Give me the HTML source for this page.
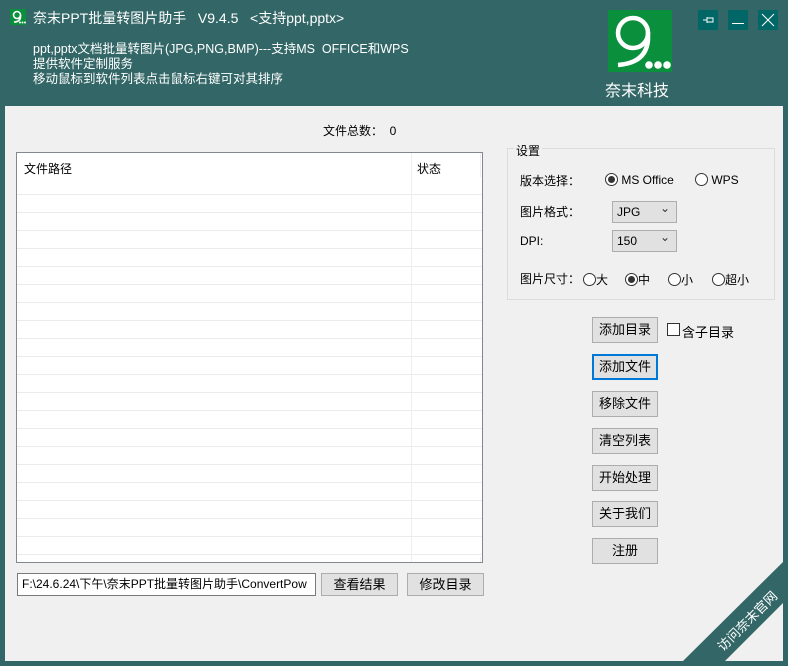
<!DOCTYPE html>
<html><head><meta charset="utf-8"><style>
*{margin:0;padding:0;box-sizing:border-box}
body{width:788px;height:666px;background:#336666;position:relative;overflow:hidden;font-family:"Liberation Sans","Noto Sans CJK SC",sans-serif;font-size:12px;color:#000}
.a{position:absolute}
.w{color:#fff}
.btn{position:absolute;background:#e1e1e1;border:1px solid #adadad;text-align:center;font-size:13px;line-height:24px}
.rad{display:inline-block;width:13px;height:13px;border:1px solid #333;border-radius:50%;vertical-align:-2px;background:#fff;position:relative}
.rad.on::after{content:"";position:absolute;left:2px;top:2px;width:7px;height:7px;border-radius:50%;background:#333}
.sel{position:absolute;background:#e1e1e1;border:1px solid #adadad;height:22px;width:65px;font-size:12px;line-height:20px;padding-left:4px}
.sel::after{content:"⌄";position:absolute;right:6px;top:-4px;font-size:12px;color:#333}
</style></head><body>
<svg class="a" style="left:10px;top:9px" width="16" height="16"><rect width="16" height="16" fill="#0a8f3c"/><circle cx="7" cy="6" r="3.5" stroke="#fff" stroke-width="1.6" fill="none"/><path d="M10.5 6V8Q10 13 4 13" stroke="#fff" stroke-width="1.6" fill="none"/><circle cx="10" cy="13.5" r="1" fill="#fff"/><circle cx="12.5" cy="13.5" r="1" fill="#fff"/><circle cx="15" cy="13.5" r="1" fill="#fff"/></svg>
<div class="a w" style="left:33px;top:8px;font-size:14px">奈末PPT批量转图片助手&nbsp;&nbsp;&nbsp;V9.4.5&nbsp;&nbsp;&nbsp;&lt;支持ppt,pptx&gt;</div>
<div class="a w" style="left:33px;top:42px;font-size:12.5px;line-height:15px">ppt,pptx文档批量转图片(JPG,PNG,BMP)---支持MS&nbsp;&nbsp;OFFICE和WPS<br>提供软件定制服务<br>移动鼠标到软件列表点击鼠标右键可对其排序</div>
<svg class="a" style="left:608px;top:10px" width="64" height="62"><rect width="64" height="62" fill="#0a8f3c"/>
<circle cx="25" cy="23" r="15" stroke="#fff" stroke-width="4.5" fill="none"/>
<path d="M40 22V30Q38 53 10 55" stroke="#fff" stroke-width="4.5" fill="none"/>
<circle cx="41" cy="55" r="3.8" fill="#fff"/><circle cx="50" cy="55" r="3.8" fill="#fff"/><circle cx="59" cy="55" r="3.8" fill="#fff"/></svg>
<div class="a w" style="left:605px;top:77px;font-size:16px">奈末科技</div>
<div class="a" style="left:698px;top:10px;width:20px;height:20px;background:#006666"><svg width="20" height="20"><path d="M5 10H9M9 7V13M9 8H15V12H9" stroke="#fff" fill="none"/></svg></div>
<div class="a" style="left:728px;top:10px;width:20px;height:20px;background:#006666"><div class="a" style="left:4px;top:13px;width:12px;height:1px;background:#fff"></div></div>
<div class="a" style="left:758px;top:10px;width:20px;height:20px;background:#006666"><svg width="20" height="20"><path d="M4 4L16 16M16 4L4 16" stroke="#fff" stroke-width="1"/></svg></div>

<div class="a" style="left:5px;top:106px;width:778px;height:555px;background:#f0f0f0"></div>
<div class="a" style="left:323px;top:122px;font-size:12px">文件总数：&nbsp;&nbsp;0</div>
<div class="a" style="left:16px;top:152px;width:467px;height:411px;background:#fff;border:1px solid #828790;overflow:hidden">
<div class="a" style="left:7px;top:7px;font-size:12px">文件路径</div>
<div class="a" style="left:400px;top:7px;font-size:12px">状态</div>
<div class="a" style="left:394px;top:0;width:1px;height:410px;background:#eee"></div>
<div class="a" style="left:463px;top:0;width:1px;height:410px;background:#eee"></div>
<div class="a" style="left:0;top:24px;width:465px;height:380px;background:repeating-linear-gradient(#fff 0 17px,#ebebeb 17px 18px)"></div>
<div class="a" style="left:394px;top:24px;width:1px;height:390px;background:#eee"></div>
</div>
<div class="a" style="left:17px;top:573px;width:299px;height:23px;background:#fff;border:1px solid #7a7a7a;font-size:12px;line-height:21px;padding-left:4px;white-space:nowrap;overflow:hidden">F:\24.6.24\下午\奈末PPT批量转图片助手\ConvertPow</div>
<div class="btn" style="left:321px;top:573px;width:77px;height:23px;line-height:21px">查看结果</div>
<div class="btn" style="left:407px;top:573px;width:77px;height:23px;line-height:21px">修改目录</div>

<div class="a" style="left:507px;top:148px;width:268px;height:152px;border:1px solid #dcdcdc"></div>
<div class="a" style="left:514px;top:142px;background:#f0f0f0;padding:0 2px;font-size:12px">设置</div>
<div class="a" style="left:520px;top:172px">版本选择：</div>
<div class="a" style="left:605px;top:173px"><span class="rad on"></span> MS Office</div>
<div class="a" style="left:695px;top:173px"><span class="rad"></span> WPS</div>
<div class="a" style="left:520px;top:203px">图片格式：</div>
<div class="sel" style="left:612px;top:201px">JPG</div>
<div class="a" style="left:520px;top:234px">DPI:</div>
<div class="sel" style="left:612px;top:230px">150</div>
<div class="a" style="left:520px;top:270px">图片尺寸：</div>
<div class="a" style="left:583px;top:271px"><span class="rad"></span>大</div>
<div class="a" style="left:625px;top:271px"><span class="rad on"></span>中</div>
<div class="a" style="left:668px;top:271px"><span class="rad"></span>小</div>
<div class="a" style="left:712px;top:271px"><span class="rad"></span>超小</div>

<div class="btn" style="left:592px;top:317px;width:66px;height:26px">添加目录</div>
<div class="a" style="left:667px;top:323px;width:13px;height:13px;border:1px solid #333;background:#fff"></div>
<div class="a" style="left:682px;top:322px;font-size:13px">含子目录</div>
<div class="btn" style="left:592px;top:354px;width:66px;height:26px;border:2px solid #0078d7;line-height:22px">添加文件</div>
<div class="btn" style="left:592px;top:391px;width:66px;height:26px">移除文件</div>
<div class="btn" style="left:592px;top:428px;width:66px;height:26px">清空列表</div>
<div class="btn" style="left:592px;top:465px;width:66px;height:26px">开始处理</div>
<div class="btn" style="left:592px;top:501px;width:66px;height:26px">关于我们</div>
<div class="btn" style="left:592px;top:538px;width:66px;height:26px">注册</div>

<svg class="a" style="left:0;top:0" width="788" height="666"><polygon points="683,661 783,562 783,603 725,661" fill="#336666"/>
<text x="0" y="0" fill="#fff" font-size="13" font-family="Liberation Sans,Noto Sans CJK SC,sans-serif" transform="translate(723,652) rotate(-45)">访问奈末官网</text></svg>
</body></html>
